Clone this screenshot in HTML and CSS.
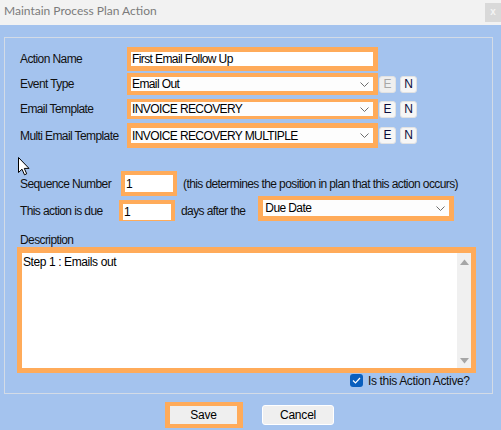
FILE: index.html
```html
<!DOCTYPE html>
<html>
<head>
<meta charset="utf-8">
<link rel="stylesheet" href="styles.css">
</head>
<body>
<div class="window">
  <div class="titlebar">
    <span class="title">Maintain Process Plan Action</span>
    <span class="close">x</span>
  </div>
  <div class="client">
    <div class="group">
      <div class="row r1">
        <span class="label">Action Name</span>
        <div class="frame f-name"><div class="field">First Email Follow Up</div></div>
      </div>
      <div class="row r2">
        <span class="label">Event Type</span>
        <div class="frame f-combo f-combo2"><div class="field combo"><span>Email Out</span><svg class="chev" width="9" height="5" viewBox="0 0 9 5"><path d="M0.5 0.5 L4.5 4.5 L8.5 0.5" fill="none" stroke="#6d6d6d" stroke-width="1"/></svg></div></div>
        <span class="btn disabled">E</span>
        <span class="btn">N</span>
      </div>
      <div class="row r3">
        <span class="label">Email Template</span>
        <div class="frame f-combo f-combo3"><div class="field combo"><span>INVOICE RECOVERY</span><svg class="chev" width="9" height="5" viewBox="0 0 9 5"><path d="M0.5 0.5 L4.5 4.5 L8.5 0.5" fill="none" stroke="#6d6d6d" stroke-width="1"/></svg></div></div>
        <span class="btn">E</span>
        <span class="btn">N</span>
      </div>
      <div class="row r4">
        <span class="label">Multi Email Template</span>
        <div class="frame f-combo f-combo4"><div class="field combo"><span>INVOICE RECOVERY MULTIPLE</span><svg class="chev" width="9" height="5" viewBox="0 0 9 5"><path d="M0.5 0.5 L4.5 4.5 L8.5 0.5" fill="none" stroke="#6d6d6d" stroke-width="1"/></svg></div></div>
        <span class="btn">E</span>
        <span class="btn">N</span>
      </div>
      <div class="row r5">
        <span class="label lbl-seq">Sequence Number</span>
        <div class="frame f-num f-seq"><div class="field">1</div></div>
        <span class="hint">(this determines the position in plan that this action occurs)</span>
      </div>
      <div class="row r6">
        <span class="label lbl-due">This action is due</span>
        <div class="frame f-num f-days"><div class="field">1</div></div>
        <span class="hint">days after the</span>
        <div class="frame f-due"><div class="field combo"><span>Due Date</span><svg class="chev" width="9" height="5" viewBox="0 0 9 5"><path d="M0.5 0.5 L4.5 4.5 L8.5 0.5" fill="none" stroke="#6d6d6d" stroke-width="1"/></svg></div></div>
      </div>
      <div class="desc-label">Description</div>
      <div class="frame f-desc">
        <div class="memo">
          <div class="memo-text">Step 1 : Emails out</div>
          <div class="scroll">
            <svg width="9" height="6" viewBox="0 0 9 6"><path d="M0 6 L4.5 0.5 L9 6 Z" fill="#a6a6a6"/></svg>
            <svg width="9" height="6" viewBox="0 0 9 6"><path d="M0 0 L4.5 5.5 L9 0 Z" fill="#a6a6a6"/></svg>
          </div>
        </div>
      </div>
      <div class="check-row">
        <span class="checkbox"><svg width="9" height="7" viewBox="0 0 9 7"><path d="M1 3.5 L3.5 6 L8 1" fill="none" stroke="#ffffff" stroke-width="1.2"/></svg></span>
        <span class="check-label">Is this Action Active?</span>
      </div>
    </div>
    <div class="buttons">
      <div class="save-frame"><span class="pbtn save">Save</span></div>
      <span class="pbtn cancel">Cancel</span>
    </div>
  </div>
  <svg class="cursor" width="13" height="20" viewBox="0 0 13 20"><path d="M0.5 0.5 L0.5 15.5 L4 12.2 L6.5 17.8 L8.7 16.8 L6.3 11.4 L11 11.4 Z" fill="#ffffff" stroke="#000000" stroke-width="1" stroke-linejoin="miter"/></svg>
</div>
</body>
</html>
```

FILE: styles.css
```css
* { box-sizing: border-box; }
html, body { margin: 0; padding: 0; }
body {
  width: 501px;
  height: 430px;
  overflow: hidden;
  background: #a4c3ee;
  font-family: "Liberation Sans", Arial, sans-serif;
  font-size: 12px;
  color: #111;
}
.window { position: relative; width: 501px; height: 430px; }
.titlebar {
  height: 25px;
  background: #f2f2f2;
  display: flex;
  justify-content: space-between;
  align-items: flex-start;
}
.title {
  font-family: Lato, "Open Sans", sans-serif;
  font-size: 12px;
  color: #7b7b7b;
  padding-left: 4px;
  line-height: 22px;
}
.close {
  margin-top: 3px;
  width: 16px;
  height: 19px;
  background: #d9d9d9;
  color: #f4f4f4;
  font-size: 10px;
  font-weight: bold;
  text-align: center;
  line-height: 18px;
}
.client { padding-top: 12px; }
.group {
  margin-left: 4px;
  width: 489px;
  height: 357px;
  border: 1px solid #d3dbe6;
  padding-left: 15px;
  display: flex;
  flex-direction: column;
  letter-spacing: -0.6px;
}
.row { display: flex; align-items: center; }
.label { width: 107px; flex: none; white-space: nowrap; }
.r1 { margin-top: 9px; height: 24px; }
.r2 { margin-top: 2px; height: 22px; }
.r3 { margin-top: 4px; height: 20px; }
.r4 { margin-top: 4px; height: 25px; }
.r5 { margin-top: 23px; height: 25px; }
.r6 { height: 25px; align-items: flex-end; }
.r6 .label, .r6 .hint { align-self: center; margin-top: 4px; }
.frame { background: #ffab5a; flex: none; }
.field {
  background: #ffffff;
  height: 100%;
  color: #000;
  white-space: nowrap;
  overflow: hidden;
  line-height: 14px;
  padding-left: 1px;
  display: flex;
  align-items: center;
}
.combo { justify-content: space-between; padding-right: 4px; background: #fdfdfd; }
.chev { flex: none; }
.f-name { width: 251px; height: 24px; padding: 5px 5px 5px 4px; }
.f-combo { width: 251px; padding: 4px 5px 4px 4px; }
.f-combo2 { height: 22px; }
.f-combo3 { height: 20px; padding-top: 3px; padding-bottom: 3px; }
.f-combo4 { height: 25px; padding-top: 5px; padding-bottom: 5px; }
.btn {
  flex: none;
  width: 17px;
  height: 17px;
  margin-left: 1px;
  background: #f6f6f6;
  border: 1px solid #e2e2e2;
  border-radius: 3px;
  text-align: center;
  line-height: 15px;
  font-size: 12px;
  color: #0b0b3a;
  letter-spacing: 0;
}
.btn + .btn { margin-left: 4px; }
.btn.disabled { color: #a8a8a8; background: #efefef; }
.lbl-seq { width: 101px; }
.lbl-due { width: 99px; }
.f-num { width: 56px; padding: 4px; }
.f-seq { height: 25px; }
.f-days { height: 21px; padding-top: 4px; padding-bottom: 1px; }
.hint { margin-left: 6px; white-space: nowrap; }
.f-due { width: 196px; height: 25px; padding: 4px 5px 5px 5px; margin-left: 13px; }
.f-due .field { padding-left: 2px; }
.desc-label { margin-top: 12px; line-height: 14px; height: 14px; }
.f-desc {
  margin-left: -3px;
  width: 459px;
  height: 126px;
  padding: 6px 5px 5px 5px;
}
.memo {
  background: #fff;
  height: 100%;
  display: flex;
}
.memo-text { flex: 1; padding: 2px 0 0 1px; color: #000; line-height: 14px; letter-spacing: -0.4px; }
.scroll {
  width: 14px;
  background: #f0f0f0;
  display: flex;
  flex-direction: column;
  justify-content: space-between;
  align-items: center;
  padding: 6px 0 4px;
}
.check-row {
  margin-top: 1px;
  margin-left: 330px;
  display: flex;
  align-items: center;
  height: 13px;
}
.checkbox {
  width: 13px;
  height: 13px;
  background: #0a5fbd;
  border-radius: 3px;
  display: flex;
  align-items: center;
  justify-content: center;
}
.check-label { margin-left: 5px; white-space: nowrap; letter-spacing: -0.35px; }
.buttons {
  display: flex;
  align-items: flex-start;
  margin-top: 8px;
  padding-left: 165px;
}
.save-frame { background: #ffab5a; padding: 4px 6px 4px 5px; height: 26px; }
.pbtn {
  display: block;
  background: #efefef;
  text-align: center;
  color: #000;
  line-height: 18px;
  letter-spacing: -0.2px;
}
.save { width: 67px; height: 18px; }
.cancel {
  margin-top: 3px;
  margin-left: 19px;
  width: 72px;
  height: 20px;
  border: 1px solid #ffffff;
  border-radius: 3px;
}
.cursor { position: absolute; left: 18px; top: 157px; }
```
